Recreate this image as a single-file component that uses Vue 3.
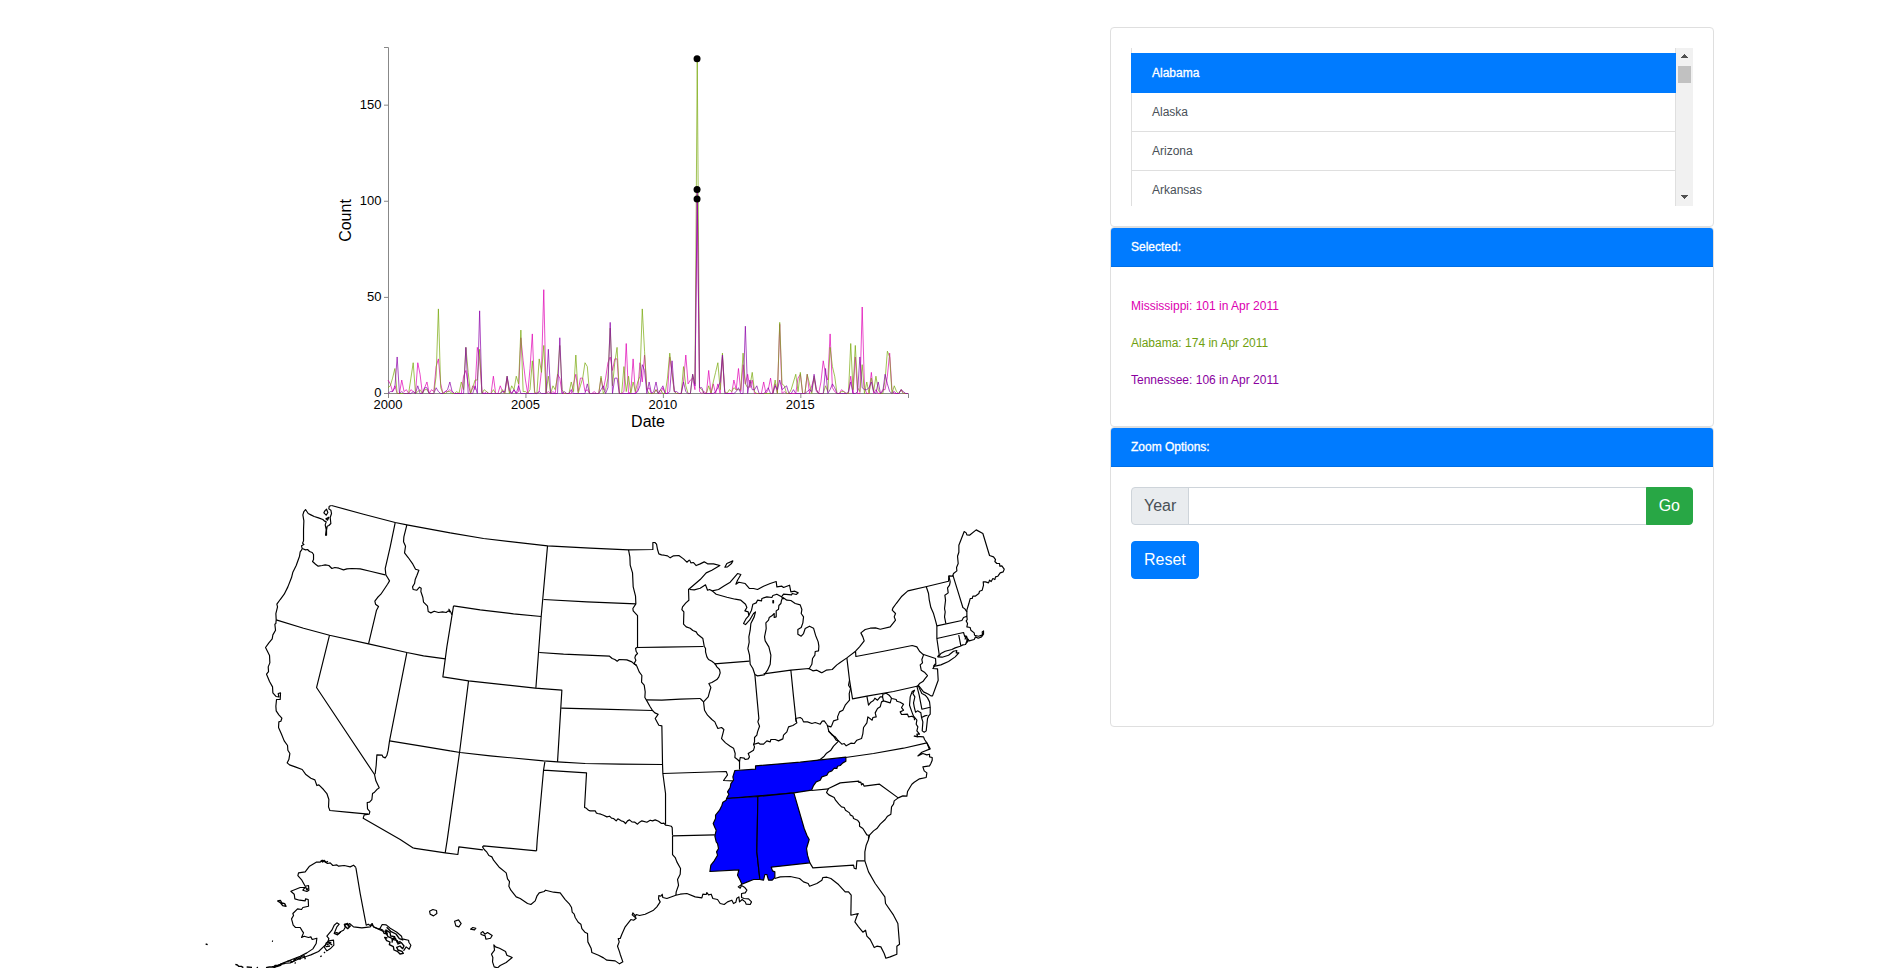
<script setup>
const states = ['Alabama', 'Alaska', 'Arizona', 'Arkansas']

const MONTHS = 227
const X0 = 388
const Y0 = 393.5
const xOf = (m) => X0 + (m * 520) / MONTHS
const yOf = (v) => Y0 - (v * 346) / 180

// "month:count" pairs, months counted from Jan 2000; missing months are 0
const series = [
  {
    name: 'Mississippi', total: 101, color: '#dc00b0', line: '#e000b4',
    data: '0:7 1:5 2:1 3:4 6:7 7:1 8:2 10:2 11:1 13:16 14:10 16:3 17:6 19:2 20:1 21:14 22:18 23:5 25:1 26:1 27:2 28:1 33:9 34:12 35:5 37:4 38:2 39:24 40:18 41:1 43:1 46:9 49:4 50:1 52:8 53:1 55:2 57:1 58:29 59:17 60:7 62:13 63:31 64:1 66:1 67:12 68:54 70:1 72:1 74:10 75:8 81:5 82:10 83:1 84:8 85:8 86:1 87:2 90:1 93:8 94:2 95:8 96:16 97:19 98:12 99:18 100:18 103:1 104:26 106:1 107:18 109:2 110:16 111:6 112:20 113:2 114:3 117:2 120:3 123:19 124:10 125:1 129:6 130:20 131:5 132:7 133:8 134:2 135:101 136:1 138:1 140:12 142:5 144:5 146:19 147:1 151:7 152:2 153:13 154:1 155:15 156:5 157:10 158:3 159:7 164:6 166:2 167:8 169:5 171:36 173:1 179:8 180:10 183:10 185:4 186:8 187:1 189:6 190:17 191:10 192:7 193:31 194:3 195:1 198:2 199:1 202:9 204:19 207:45 208:3 211:11 213:2 216:2 217:2 218:9 219:21 220:2 224:2'
  },
  {
    name: 'Alabama', total: 174, color: '#6f9f10', line: '#78a80c',
    data: '0:3 1:4 2:8 3:13 10:8 11:16 13:1 14:2 16:2 17:2 21:9 22:44 23:3 26:1 27:1 30:1 32:6 33:2 34:24 35:11 37:3 38:7 39:7 40:23 42:2 43:1 46:2 50:2 52:9 54:4 55:2 56:9 57:5 58:33 59:1 60:1 62:2 63:17 66:18 67:11 68:25 70:9 72:4 73:2 74:9 75:25 76:2 80:6 81:1 82:20 84:4 85:8 86:16 87:14 93:9 95:2 96:8 97:34 98:4 99:16 100:24 103:14 104:1 105:9 107:6 108:1 109:6 110:9 111:44 112:22 113:2 117:2 119:2 122:8 123:21 124:11 125:1 129:14 130:4 133:10 134:5 135:174 136:3 137:2 140:4 142:6 143:11 144:16 145:2 146:21 147:1 149:2 150:1 151:3 152:2 153:2 154:2 155:21 156:5 157:3 158:4 159:11 160:1 169:7 171:37 172:5 173:4 176:2 177:6 178:10 179:1 180:11 183:10 184:5 186:9 187:2 191:4 192:1 193:24 194:14 195:9 198:1 199:1 202:26 203:2 204:25 205:3 206:1 207:15 209:6 211:8 212:1 213:9 214:2 217:7 218:22 219:19 221:4 222:1 224:2'
  },
  {
    name: 'Tennessee', total: 106, color: '#8a00a0', line: '#8a00a8',
    data: '1:1 2:1 3:3 4:19 6:1 11:1 13:4 16:3 17:3 21:3 22:1 25:1 26:2 27:6 28:1 34:24 38:4 40:43 50:1 51:1 52:9 53:2 55:2 57:4 66:1 70:23 75:29 77:1 80:2 87:5 93:2 94:4 96:3 97:37 99:8 100:8 109:1 110:4 111:15 112:12 114:6 116:1 117:6 119:2 120:4 123:1 124:17 125:1 126:1 129:6 130:1 133:10 134:4 135:106 136:3 137:3 143:1 144:3 145:6 146:20 152:1 153:3 156:35 158:7 159:2 160:2 161:4 165:1 166:3 169:4 170:2 171:7 172:2 173:3 174:4 177:2 183:1 184:2 185:1 186:10 187:2 191:13 193:2 194:5 195:3 201:1 202:6 205:1 206:19 207:3 208:2 209:2 210:3 211:6 212:1 214:6 216:1 217:10 218:5 219:1 221:1 224:2 225:1'
  }
]

const linePoints = (s) => {
  const values = new Array(MONTHS + 1).fill(0)
  s.data.split(' ').forEach((pair) => {
    const [m, v] = pair.split(':').map(Number)
    values[m] = v
  })
  return values.map((v, m) => `${xOf(m).toFixed(2)},${yOf(v).toFixed(2)}`).join(' ')
}
const lines = series.map((s) => ({ ...s, points: linePoints(s) }))

const yTicks = [0, 50, 100, 150]
const xTicks = [2000, 2005, 2010, 2015].map((year) => ({ year, x: xOf((year - 2000) * 12) }))

// Borders by region; every region has its own origin, in thirds of a pixel
const regions = [
  {
    name: 'west', x: 190, y: 490,
    paths: [
      'M424 46L520 72 615 97 650 104 780 128',
      'M424 46L417 48 416 56 422 60 424 70 420 82 422 100 416 106 411 108 409 120 409 135 406 135 408 118 405 104 408 95 402 92 398 88 385 83 372 79 362 74 354 70 346 58 341 64 338 74 341 92 340 118 340 152 337 159 341 163 334 167 336 175 346 179 352 178 358 184 366 187 370 193 370 208 367 214 376 222 384 228 396 226 405 224 416 226 425 235 434 232 446 234 460 239 470 236 485 235 510 236 540 243 585 254',
      'M404 62l5-5 4 10-5 8-7-7zM407 86l9-5-4 9z',
      'M615 97L600 170 585 235 587 254 592 262 598 272 592 282 580 300 572 312 562 322 554 333 556 342 565 349 559 360 553 385 535 461',
      'M336 177L330 185 328 198 318 226 308 246 304 262 293 290 282 312 270 328 260 342 262 350 257 370 258 389 257 400 254 402 256 420 248 434 246 446 236 458 226 472 232 484 238 496 239 518 234 530 235 544 229 552 238 574 247 590 248 608 258 619 266 620 264 610 271 608 270 628 259 628 257 648 258 662 266 674 275 684 272 693 266 695 265 712 274 732 282 752 292 766 293 780 299 790 296 808 291 818 298 824 315 830 336 838 346 852 362 864 374 869 380 886 386 884 400 898 410 910 416 928 415 950 419 961 470 966 534 972',
      'M258 389L340 414 418 435 535 461 650 487 700 497 766 506',
      'M418 435L379 592 553 853',
      'M650 487L598 752 594 780 590 796 585 803 578 800 576 795 560 794 558 825 555 850 553 853 557 872 567 893 560 898 553 906 547 910 545 928 538 936 531 937 532 956 539 964 537 972 522 974 519 984 630 1048 670 1074',
      'M598 752L690 767 780 782',
      'M650 104L641 140 640 155 646 168 643 188 654 202 668 222 676 237 686 240 680 256 675 268 673 280 667 290 669 298 680 300 688 291 693 294 692 304 698 322 700 336 712 348 714 364 722 368 732 363 745 367 757 365 768 367 774 362 780 365'
    ]
  },
  {
    name: 'plains', x: 440, y: 490,
    paths: [
      'M30 128L130 145 322 167 450 174 565 179 638 178 638 157 644 157 649 162 652 178 656 191 664 194 672 195 682 197 690 203 700 197 716 196 730 206 740 216 748 209',
      'M30 365L26 357 32 366 35 374',
      'M30 782L60 787 150 797 310 812 352 815 435 820 540 822 667 823',
      'M40 347L20 470 8 560 85 572 285 594 365 600 352 815',
      'M85 572L58 787 21 1050 15 1088',
      'M322 167L303 379 287 594M40 347L120 359 220 371 303 379',
      'M310 328L440 335 587 341M297 487L370 492 508 498 516 505 524 508 531 513 537 508 560 509 575 515 583 522 590 525',
      'M363 654L480 657 637 661',
      'M565 179L569 200 570 225 577 248 579 290 586 318 587 341 578 355 579 362 592 376 592 472 586 474 588 484 592 490 586 496 584 503 587 510 582 520 590 528 597 545 605 556 604 576 612 585 615 605 614 622 620 632 629 648 637 661 644 668 654 672 650 678 645 685 651 696 656 705 665 707 667 823 668 850 676 910 676 1003',
      'M588 472L670 471 790 469M619 629L665 630 720 627 780 625',
      'M314 815L310 840 291 1050 289 1082M310 840L439 848 433 952 437 953 445 960 450 962 465 962 468 968 472 970 482 972 490 975 500 980 508 978 514 984 520 985 528 992 533 986 543 992 550 994 556 1000 562 992 568 989 575 995 584 996 592 1002 598 996 605 992 620 996 630 990 637 992 645 989 655 993 664 1000 671 999 676 1005 684 1006 693 1008 696 1012 697 1036'
    ]
  },
  {
    name: 'lakes', x: 620, y: 520,
    paths: [
      'M208 119L212 128 220 127 228 136 240 131 252 125 262 131 280 131 299 136 275 150 258 158 240 178 205 208 206 240 197 248 187 260 185 268 191 275 190 312 198 320 210 324 218 331 228 335 232 342 248 355 252 378',
      'M208 208L222 209 240 204 256 194 259 202 262 210 268 208 276 212 288 222 320 231 345 237 362 240 376 252 380 262 374 272 384 275 386 286 378 295 370 310 376 313 388 300 400 280 406 275 402 290 392 310 390 330 386 350 387 366 383 385 388 405 390 432 398 445 404 463 412 467 432 464 442 450 450 432 452 405 446 380 435 362 433 350 438 325 437 308 445 300 447 292 455 287 462 280 462 292 468 290 468 272 475 267 476 256 482 250 484 240 488 232 500 240 512 241 525 250 540 254 545 268 543 280 550 290 548 308 543 322 533 328 533 342 543 348 550 340 555 325 568 318 580 324 586 345 594 365 596 378 595 392 585 394 584 405 577 415 575 432 566 447',
      'M276 212L295 208 310 198 330 186 352 160 362 163 352 180 347 192 356 186 375 190 388 205 400 205 412 208 430 198 450 190 468 184 470 200 485 198 490 202 508 195 512 215 524 213 534 218 528 223 516 220 514 224 490 222 484 230 470 222 458 226 455 232 440 230 425 235 424 242 412 240 408 248 398 252 394 270 386 285',
      'M314 141L320 130 338 122 334 130 322 140zM458 241h2v7h-2zM484 232l8 4',
      'M252 378L256 385 256 395 260 410 265 418 275 423 285 431 290 440 298 448 300 458 296 470 290 478 275 487 266 490 272 502 268 515 264 530 250 545 253 570 262 585 275 598 284 605 287 612 293 625 304 622 311 628 308 640 304 655 316 668 330 678 340 684 345 700 344 712 352 718 358 724 360 712 372 714 375 718 384 716 388 710 384 700 400 690 403 680 400 673',
      'M282 431L388 423M240 535L250 545',
      'M404 463L410 530 416 595 413 605 418 618 412 635 410 645 403 652 403 665 400 673 415 668 420 672 430 672 440 662 450 665 452 658 465 658 475 662 488 656 490 645 500 635 505 620 518 616 530 608 526 595 540 592 546 596 550 605 562 605 575 610 585 607 600 612 606 603 612 602 620 613',
      'M625 632L636 645 645 650 655 663',
      'M512 450L520 530 528 605M430 461L512 450 566 445 578 452 590 450 605 458',
      'M358 724L358 748M585 723L600 718 612 708 618 700 632 690 640 678 655 663'
    ]
  },
  {
    name: 'northeast', x: 820, y: 520,
    paths: [
      'M5 458L18 450 36 448 50 434 60 427 80 413 106 393 118 380 132 362 128 350 122 338 135 328 150 324 166 323 180 327 210 320 226 300 222 290 226 280 216 270 218 264 228 250 245 228 263 212 320 199 385 183 386 167 397 168 400 160 410 152 409 142 414 130 412 108 416 96 416 75 432 34 438 38 440 44 448 45 468 29 488 40 508 106 520 110 526 118 524 124 530 130 538 130 539 138 545 137 552 147 549 155 540 158 533 168 526 170 524 178 518 175 513 184 508 180 505 188 496 185 489 185 490 195 486 210 478 213 476 220 465 228 458 228 456 235 450 235 446 250 440 270 440 275',
      'M398 165L412 210 428 262 434 266 440 275 440 288M386 167L390 185 388 195 382 203 384 218 374 225 376 240 373 265 375 275 373 290 377 310',
      'M318 199L325 220 327 238 332 262 340 280 347 305 350 317 350 355 357 403 352 410',
      'M350 317L425 301 430 292 440 288 441 298 438 302 442 310 440 320 450 322 452 330 462 338 463 345 475 348 487 344 486 335 490 332 490 342 484 350 474 354 466 350 462 358 447 362 443 356',
      'M350 355L430 337 434 350 436 347 440 352 440 362 436 373 428 374 420 378 405 383 395 388 375 393 362 400 355 410M415 341L422 377M434 358l5-10 5 14-8 10',
      'M352 410L366 411 385 405 400 393 410 391 408 398 416 398 405 410 385 424 362 434 348 437 340 438 346 430',
      'M308 402L346 415 347 432 338 445 352 446 354 480 345 505 337 527 332 527 325 522 310 515 300 502 294 495',
      'M106 393L107 409 190 393 276 376 290 380 298 393 310 404 305 418 307 428 300 434 303 450 314 457 322 466 314 476 308 484 298 490 290 500',
      'M80 413L88 480 97 536 140 528 220 514 290 498L297 525 305 567 330 561 328 545 322 533 315 525 305 520 298 505 294 495',
      'M330 561L330 582 325 588 322 595 318 632 312 636 306 632 308 605 304 592 302 578 292 572 286 576 282 560 280 548 284 530 278 520 283 510 276 514 270 530 268 555 275 575 280 588 290 600 288 612 293 620 290 632 298 642 290 642 293 650 282 648 310 650 313 658 320 668 328 688',
      'M304 592l10-5 8-2M140 528L145 555 152 546 160 541 164 534 172 540 180 530 187 530 188 522 198 519 208 526 215 535 228 538 230 543 240 546 250 552 244 562 250 570 240 575 244 583 262 582 265 590 275 588 282 592 283 600',
      'M187 530L190 542 210 548 214 534M190 542L184 545 180 560 172 565 165 578 168 590 158 592 156 600 143 590 140 608 130 622 128 640 124 655 110 660 102 670 92 669 78 677 72 670 65 672 55 662 48 660 38 645 26 634 22 617',
      'M88 480L85 495 91 505 87 520 88 540 75 555 68 570 58 575 52 590 53 598 40 602 35 615 32 620 22 617 20 613',
      'M76 712L160 700 250 684 320 668'
    ]
  },
  {
    name: 'carolinas', x: 760, y: 670,
    paths: [
      'M500 218L510 236 485 246 473 257 488 250 500 254 508 252 508 260 516 262 516 270 512 280 508 287 488 290 492 302 500 308 498 322 478 326 462 336 455 342 442 364 440 378 428 377 414 383 402 392 400 402 394 410 392 432 382 438 375 448 360 462 350 475 340 482 325 498',
      'M414 383L358 342 312 348 308 340 304 344 302 336 296 337 296 333 240 338 205 355 199 367 206 374 222 382 226 390 236 402 244 410 252 412 256 420 268 428 270 434 278 438 280 445 292 450 298 458 298 468 308 475 320 494 328 496 325 506'
    ]
  },
  {
    name: 'south', x: 640, y: 740,
    paths: [
      'M68 100L258 94 262 104 250 121 278 122M514 151L565 146',
      'M509 368L518 383 640 375 642 384 648 386 650 362 674 362',
      'M685 288L685 298 678 315 674 335 674 362 685 395 705 430 734 470 736 490 760 525 773 550 778 612 770 618 770 642 750 650 737 654 732 640 722 620 710 618 702 622 690 598 680 588 676 570 668 576 655 560 644 545 650 528 654 520 632 525 633 465 625 455 615 455 595 433 572 415 560 411 548 412 545 420 530 430 508 438 504 430 490 425 478 415 450 409 420 410 404 415',
      'M97 287L224 284M97 287L97 343 105 352 110 365 121 385 120 402 112 418 115 435 108 455 107 465 120 462 140 460 165 470 185 473 188 462 198 463 200 457 205 464 213 462 218 475 232 478 240 490 252 493 262 485 275 480 280 490 287 486 290 474 296 470 298 485 306 478 315 485 318 492 330 493 334 485 325 476 312 475 304 472 304 460 315 458 320 450 314 442 304 436 300 444 294 440 305 432'
    ]
  },
  {
    name: 'texas', x: 440, y: 760,
    paths: [
      'M707 405L680 415 668 412 666 402 662 408 656 406 655 416 660 425 650 440 640 450 615 462 598 466 588 463 586 468 578 458 576 464 588 474 580 480 572 478 555 500 545 522 540 535 534 535 537 545 532 558 538 575 540 582 548 605 538 611 525 602 500 600 490 593 475 585 455 577 453 565 443 545 442 520 434 516 425 505 422 492 414 486 405 472 402 462 396 456 394 442 388 432 375 418 360 398 340 396 316 390 312 394 297 398 290 408 285 422 272 433 262 430 240 415 228 410 212 390 206 378 208 364 202 356 198 338 178 322 160 300 155 290 146 286 140 276 132 268 127 260 130 257 289 272',
      'M-80 264L15 278 53 283 56 260 128 269'
    ]
  },
  {
    name: 'pacific', x: 190, y: 830,
    paths: [
      'M718 243L728 238 739 241 740 250 730 257 720 252zM793 273L805 269 813 280 806 290 797 287zM841 297L848 292 857 294 853 299zM872 308l6-4 6 8 8-5 14 9-5 8-14 3-2-10-12-4z',
      'M911 344L916 350 928 354 946 364 950 375 966 382 948 397 930 406 922 413 912 410 907 395 908 382 904 372 913 360z',
      'M497 112L490 105 480 110 462 106 445 108 440 104 428 106 420 98 412 100 396 90 390 96 378 96 358 108 345 125 325 128 323 136 335 150 345 168 355 166 356 180 350 184 338 180 344 172 330 172 302 183 312 192 314 206 328 210 345 212 346 206 354 208 355 228 338 232 334 238 322 236 308 250 310 256 304 266 309 285 316 292 330 292 336 302 340 308 334 322 342 318 355 322 362 320 366 328 380 324 378 340 368 356 350 368 330 378 305 388 280 398 250 412',
      'M250 413L275 400 300 398 322 388 350 378 362 374 385 364 405 345 412 338 416 325 410 318 425 300 432 285 440 278 447 282 440 290 432 310 442 314 452 304 460 300 465 292 463 282 475 284 478 280 490 290 515 293 540 290 545 284 552 291 580 304',
      'M497 112L510 190 528 285 534 282 540 286 546 280 550 290 568 297 576 283 588 284 600 294 620 306 634 318 636 326 655 330 656 336 662 345 657 357 648 350 640 362',
      'M403 352L408 338 416 332 430 330 431 345 422 354 410 362zM410 344l8-4 8 4'
    ]
  }
]

// Island chains, drawn with a heavier pen
const islands = [
  'M263 213l8-2 5 8 8 2 4 8-10-2-6-8zM392 92l6 4 4-5 6 6 6-3M346 170l5 10 4-6',
  'M402 366l3 3M391 380l4-3M414 336l10 3M408 350l12-2',
  'M463 284l10-4 2 8 6 0-8 8-6-6zM432 310l8-2 6 3 6-6',
  'M568 296l10 4 4 10 10 2-4-12 12 8 2 10 12 2-6 8 14 4 2 10 10-4 8 10-4 8-8-8-10 4 4 8 12 4 4 6-10 2-8-8-10-4-2-10-12-6 2-8-10-4-6-10 8 2M590 292l12 12 16 8 10 14 12 4M604 330l12-6 6 14 10-4M584 302l10 18 14 6-2 12',
  'M47 342l6 2M246 333l3 1M136 403l6 2 4 4 8 0 6 4M170 411l16 1M200 413l4-1M228 413l10-2 12 0 6-5 10 0 10-4 10-2M246 410l14 0 14-5M292 394l10-2 4 4 10-6 4-6 10 0 6-6 8 0M310 390l12-6 10 4M314 398l3 2M342 376l4 12'
]

const filledStates = [
  'M284 91L346 87 346 77 480 66 617 51 617 63 608 68 600 76 592 78 590 85 582 84 575 92 565 96 560 105 545 110 540 120 528 125 520 136 514 150 461 158 259 175 266 162 262 155 270 142 272 130 280 120 278 110z',
  'M259 175L353 169 350 335 359 418 340 418 322 425 305 432 300 420 292 405 296 389 209 394 212 375 222 362 232 345 229 335 235 325 232 310 228 305 224 288 228 270 224 262 219 250 226 235 226 225 238 210 245 196 248 186 258 180z',
  'M353 169L461 158 492 265 500 285 507 298 499 325 502 345 509 368 393 381 397 392 404 395 404 412 396 420 385 420 380 403 374 403 370 420 359 418 350 335z'
]
</script>

<template>
  <main class="page">
    <section class="visuals">
      <svg class="chart" width="1090" height="450" viewBox="0 0 1090 450">
        <g class="axis">
          <path d="M384 47.5H388.5V393.5H384" />
          <path d="M388.5 398V393.5H908.5V398" />
          <path v-for="t in yTicks" :key="t" :d="`M384 ${yOf(t)}H388.5`" />
          <path v-for="t in xTicks" :key="t.year" :d="`M${t.x + 0.5} 393.5V398`" />
        </g>
        <g class="tick-text">
          <text v-for="t in yTicks" :key="t" class="end" x="381.5" :y="Math.floor(yOf(t)) + 4">{{ t }}</text>
          <text v-for="t in xTicks" :key="t.year" class="mid" :x="t.x" y="409">{{ t.year }}</text>
        </g>
        <text class="axis-title" x="648" y="427">Date</text>
        <text class="axis-title" transform="translate(351 220.5) rotate(-90)">Count</text>
        <polyline
          v-for="l in lines"
          :key="l.name"
          class="series"
          :points="l.points"
          :stroke="l.line"
        />
        <circle v-for="l in lines" :key="l.name" :cx="xOf(135) - 0.2" :cy="yOf(l.total) - 0.3" r="3.5" />
      </svg>
      <svg class="map" width="1090" height="518" viewBox="0 450 1090 518">
        <g v-for="r in regions" :key="r.name" :transform="`translate(${r.x + 0.2} ${r.y + 0.2}) scale(.33333)`">
          <path v-for="(d, i) in r.paths" :key="i" :d="d" />
        </g>
        <g class="islands" transform="translate(190 830) scale(.33333)">
          <path v-for="(d, i) in islands" :key="i" :d="d" />
        </g>
        <g class="picked" transform="translate(640.2 740.2) scale(.33333)">
          <path v-for="(d, i) in filledStates" :key="i" :d="d" />
        </g>
      </svg>
    </section>

    <aside class="panel">
      <div class="card short">
        <div class="card-body">
          <div class="scroller">
            <ul class="list">
              <li v-for="(s, i) in states" :key="s" :class="{ active: i === 0 }">{{ s }}</li>
            </ul>
            <div class="bar">
              <svg width="17" height="17"><path d="M5 10h7v-1h-1v-1h-1v-1h-1v-1h-1v1h-1v1h-1v1h-1z" /></svg>
              <div class="thumb"></div>
              <svg class="down" width="17" height="17"><path d="M5 6h7v1h-1v1h-1v1h-1v1h-1v-1h-1v-1h-1v-1h-1z" /></svg>
            </div>
          </div>
        </div>
      </div>

      <div class="card short">
        <div class="card-header">Selected:</div>
        <div class="card-body picks">
          <p v-for="s in series" :key="s.name" :style="{ color: s.color }">{{ s.name }}: {{ s.total }} in Apr 2011</p>
        </div>
      </div>

      <div class="card tall">
        <div class="card-header">Zoom Options:</div>
        <div class="card-body">
          <div class="input-group">
            <span class="addon">Year</span>
            <input type="text" />
            <button class="btn go">Go</button>
          </div>
          <button class="btn reset">Reset</button>
        </div>
      </div>
    </aside>
  </main>
</template>

<style>
html,
body {
  margin: 0;
  background: #fff;
  overflow: hidden;
}
</style>

<style scoped>
* {
  box-sizing: border-box;
}
.page {
  display: flex;
  gap: 20px;
  width: 1903px;
  height: 968px;
  overflow: hidden;
  font-family: "Liberation Sans", Arial, sans-serif;
  color: #212529;
}
.visuals {
  width: 1090px;
  flex: none;
  display: flex;
  flex-direction: column;
}
.chart,
.map {
  display: block;
}
.axis path {
  fill: none;
  stroke: #888;
  stroke-width: 1;
}
.tick-text {
  font-size: 13px;
  fill: #000;
}
.tick-text .end {
  text-anchor: end;
}
.tick-text .mid {
  text-anchor: middle;
}
.axis-title {
  font-size: 16px;
  text-anchor: middle;
  fill: #000;
}
.series {
  fill: none;
  stroke-width: 1;
  stroke-opacity: 0.7;
}
.map path {
  fill: none;
  stroke: #000;
  stroke-width: 3.5;
  stroke-linejoin: round;
}
.map .islands path {
  stroke-width: 4;
}
.map .picked path {
  fill: #00f;
}
.panel {
  width: 604px;
  padding-top: 27px;
}
.card {
  display: flex;
  flex-direction: column;
  border: 1px solid #dfdfdf;
  border-radius: 4px;
  background: #fff;
}
.short {
  height: 200px;
}
.tall {
  height: 300px;
}
.card-header {
  height: 39px;
  padding: 12px 20px;
  font-size: 12px;
  line-height: 14px;
  color: #fff;
  -webkit-text-stroke: 0.3px #fff;
  background: #007bff;
  border-bottom: 1px solid #006fe6;
  border-radius: 3px 3px 0 0;
}
.card-body {
  flex: 1;
  padding: 20px;
}
.scroller {
  display: flex;
  height: 158px;
  overflow: hidden;
}
.list {
  flex: 1;
  margin: 0;
  padding: 5px 0 0;
  list-style: none;
  border: solid #dfdfdf;
  border-width: 0 1px;
}
.list li {
  height: 39px;
  padding: 12px 20px 0;
  font-size: 12px;
  line-height: 14px;
  color: #495057;
  border-bottom: 1px solid #dfdfdf;
}
.list li.active {
  height: 40px;
  margin: 0 -1px;
  padding: 13px 21px 0;
  color: #fff;
  -webkit-text-stroke: 0.3px #fff;
  background: #007bff;
  border-color: #007bff;
}
.bar {
  display: flex;
  flex-direction: column;
  width: 17px;
  background: #f1f1f1;
}
.bar svg {
  display: block;
  fill: #505050;
}
.thumb {
  width: 13px;
  height: 17px;
  margin: 1px 2px 0;
  background: #c1c1c1;
}
.bar .down {
  margin-top: auto;
}
.picks {
  padding-top: 29px;
}
.picks p {
  margin: 0 0 16px;
  font-size: 12px;
  line-height: 21px;
}
.input-group {
  display: flex;
  height: 38px;
  margin-bottom: 16px;
}
.addon {
  padding: 6px 12px;
  font-size: 16px;
  line-height: 24px;
  color: #495057;
  background: #e9ecef;
  border: 1px solid #ced4da;
  border-radius: 4px 0 0 4px;
}
.input-group input {
  flex: 1;
  min-width: 0;
  margin: 0 -1px;
  border: 1px solid #ced4da;
  background: #fff;
}
.btn {
  height: 38px;
  padding: 6px 12px;
  border: 1px solid;
  font: 16px/24px "Liberation Sans", Arial, sans-serif;
  color: #fff;
  border-radius: 4px;
}
.go {
  background: #28a745;
  border-color: #28a745;
  border-radius: 0 4px 4px 0;
  z-index: 1;
}
.reset {
  background: #007bff;
  border-color: #007bff;
}
</style>
